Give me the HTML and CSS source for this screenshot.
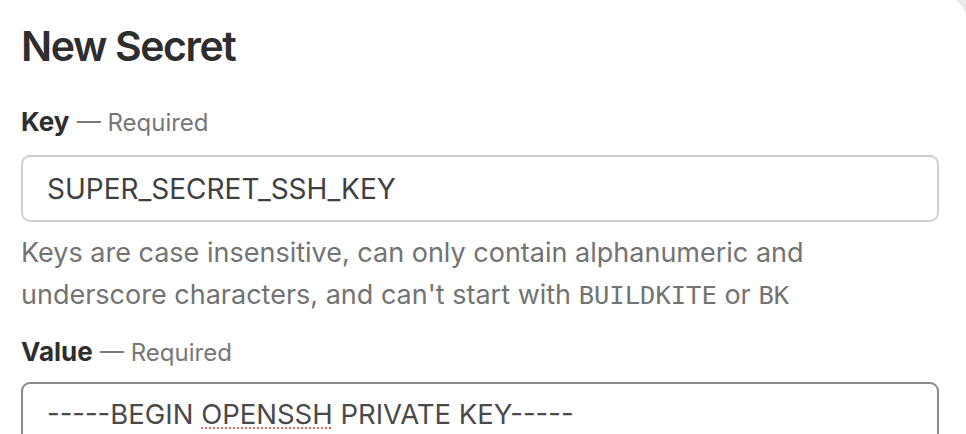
FILE: index.html
```html
<!DOCTYPE html>
<html lang="en">
<head>
<meta charset="utf-8">
<title>New Secret</title>
<link rel="stylesheet" href="styles.css">
</head>
<body>
<div class="page">
  <div class="corner" aria-hidden="true"></div>
  <h1 class="title">New Secret</h1>
  <div class="field field-key">
    <label class="label" for="key"><strong>Key</strong> <span class="req">— Required</span></label>
    <input class="input" id="key" type="text" value="SUPER_SECRET_SSH_KEY">
    <p class="hint">Keys are case insensitive, can only contain alphanumeric and<br>underscore characters, and can't start with <code>BUILDKITE</code> or <code>BK</code></p>
  </div>
  <div class="field field-value">
    <label class="label"><strong>Value</strong> <span class="req">— Required</span></label>
    <div class="textarea" role="textbox">-----BEGIN <span class="misspelled">OPENSSH</span> PRIVATE KEY-----</div>
  </div>
</div>
</body>
</html>
```

FILE: styles.css
```css
html, body {
  margin: 0;
  padding: 0;
  background: #ffffff;
  overflow: hidden;
}

body {
  font-family: Inter, "Liberation Sans", Arial, sans-serif;
  color: #333333;
}

.page {
  position: relative;
  padding: 0 27px 0 21px;
  height: 434px;
  box-sizing: border-box;
  overflow: hidden;
}

.corner {
  position: absolute;
  top: 0;
  right: 0;
  width: 40px;
  height: 48px;
  overflow: hidden;
  background: linear-gradient(180deg, #eeeeee 0%, #f6f6f6 60%, #ffffff 100%);
}

.corner::before {
  content: "";
  position: absolute;
  right: -4px;
  top: -10px;
  width: 200px;
  height: 200px;
  border-top-right-radius: 40px;
  background: #ffffff;
  box-shadow: 0 0 10px rgba(0, 0, 0, 0.10);
}

.title {
  margin: 21px 0 0;
  font-size: 41px;
  line-height: 50px;
  font-weight: 600;
  color: #2e2e2e;
  letter-spacing: -1.4px;
}

.field-key {
  margin-top: 35px;
}

.label {
  display: block;
  font-size: 26px;
  line-height: 32px;
}

.label strong {
  font-weight: 700;
  color: #2e2e2e;
}

.req {
  font-size: 24px;
  color: #777777;
}

.input {
  display: block;
  box-sizing: border-box;
  width: 100%;
  height: 67px;
  margin: 16px 0 0;
  padding: 0 24px;
  border: 2px solid #cfcfcf;
  border-radius: 9px;
  font-family: Inter, "Liberation Sans", Arial, sans-serif;
  font-size: 28px;
  color: #404040;
  background: #ffffff;
  outline: none;
}

.hint {
  margin: 10px 0 0;
  font-size: 27px;
  line-height: 42px;
  color: #737373;
}

.hint code {
  font-family: "DejaVu Sans Mono", "Liberation Mono", monospace;
  font-size: 25.5px;
}

.field-value {
  margin-top: 20px;
}

.textarea {
  box-sizing: border-box;
  margin-top: 13px;
  height: 140px;
  padding: 14px 24px;
  border: 2px solid #8a8a8a;
  border-radius: 9px;
  font-size: 27.5px;
  line-height: 32px;
  color: #4a4a4a;
}

.misspelled {
  text-decoration: underline dotted #e0645a;
  text-decoration-thickness: 2px;
  text-underline-offset: 3px;
}
```
